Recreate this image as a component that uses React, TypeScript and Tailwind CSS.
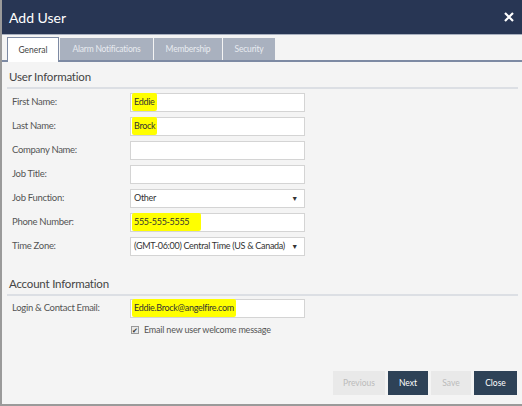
import React from "react";

const font = { fontFamily: 'Lato, "Noto Sans", sans-serif' };

function Hl({ children }: { children: React.ReactNode }) {
  return <span className="bg-[#ffff00] px-[2px] -mx-[2px] py-[2px] rounded-[2px]">{children}</span>;
}

function Row({ label, children }: { label: string; children?: React.ReactNode }) {
  return (
    <div className="flex items-center h-[24px]">
      <div className="w-[123px] pl-[5px] text-[9.5px] tracking-[-0.3px] text-[#555]">{label}</div>
      {children}
    </div>
  );
}

function Input({ children }: { children?: React.ReactNode }) {
  return (
    <div className="w-[175px] h-[19px] bg-white border border-[#d4d4d4] flex items-center px-[3px] text-[9px] tracking-[-0.3px] text-[#333] whitespace-nowrap">
      {children}
    </div>
  );
}

function Select({ value }: { value: string }) {
  return (
    <div className="w-[175px] h-[19px] bg-white border border-[#d4d4d4] flex items-center justify-between px-[3px] text-[9px] tracking-[-0.3px] text-[#333] whitespace-nowrap">
      <span>{value}</span>
      <span className="text-[7px] text-[#333] mr-[3px]">▼</span>
    </div>
  );
}

export default function App() {
  return (
    <div className="w-[522px] h-[406px] bg-[#f4f4f4] flex flex-col border-l-2 border-b-2 border-[#9a9a9a] overflow-hidden" style={font}>
      <div className="h-[35px] bg-[#283654] flex items-center justify-between pl-[7px] pr-[8px] shrink-0 border-b border-[#a8b0bf]">
        <span className="text-white text-[14px]">Add User</span>
        <svg width="10" height="10" viewBox="0 0 10 10">
          <path d="M1 1 L9 9 M9 1 L1 9" stroke="white" strokeWidth="2.2" />
        </svg>
      </div>
      <div className="flex items-end pl-[5px] pt-[4px] h-[27px] border-b-2 border-[#7d8aa3] shrink-0">
        <div className="w-[52px] bg-white border border-[#7d8aa3] border-b-0 flex items-center justify-center text-[8.5px] text-[#444] -mb-[2px] h-[25px]">General</div>
        <div className="w-[93px] h-[22px] bg-[#a9b1bf] ml-[1px] flex items-center justify-center text-[8.5px] tracking-[-0.2px] text-[#e8ebf0]">Alarm Notifications</div>
        <div className="w-[68px] h-[22px] bg-[#a9b1bf] ml-[1px] flex items-center justify-center text-[8.5px] tracking-[-0.2px] text-[#e8ebf0]">Membership</div>
        <div className="w-[52px] h-[22px] bg-[#a9b1bf] ml-[1px] flex items-center justify-center text-[8.5px] tracking-[-0.2px] text-[#e8ebf0]">Security</div>
      </div>
      <div className="flex flex-col pl-[5px] pr-[4px] pt-[6px]">
        <div className="text-[11.5px] tracking-[-0.2px] leading-[18px] text-[#444] pl-[2px] pb-[1px] border-b-2 border-[#dcdfe4]">User Information</div>
        <div className="flex flex-col pt-[1px]">
          <Row label="First Name:"><Input><Hl>Eddie</Hl></Input></Row>
          <Row label="Last Name:"><Input><Hl>Brock</Hl></Input></Row>
          <Row label="Company Name:"><Input /></Row>
          <Row label="Job Title:"><Input /></Row>
          <Row label="Job Function:"><Select value="Other" /></Row>
          <Row label="Phone Number:"><Input><span className="bg-[#ffff00] px-[2px] -mx-[2px] py-[2px] pr-[12px] rounded-[2px]">555-555-5555</span></Input></Row>
          <Row label="Time Zone:"><Select value="(GMT-06:00) Central Time (US & Canada)" /></Row>
        </div>
        <div className="text-[11.5px] tracking-[-0.2px] leading-[18px] text-[#444] pl-[2px] pb-[1px] mt-[17px] border-b-2 border-[#dcdfe4]">Account Information</div>
        <div className="flex flex-col">
          <Row label="Login & Contact Email:"><Input><Hl>Eddie.Brock@angelfire.com</Hl></Input></Row>
          <div className="flex items-center h-[20px] pl-[124px]">
            <div className="w-[8px] h-[8px] border border-[#999] bg-[#e8e8e8] flex items-center justify-center text-[7px] leading-none text-[#333]">✔</div>
            <span className="ml-[5px] text-[9px] tracking-[-0.2px] text-[#555]">Email new user welcome message</span>
          </div>
        </div>
      </div>
      <div className="flex-1" />
      <div className="flex justify-end gap-[3px] pr-[5px] pb-[9px]">
        <div className="w-[52px] h-[24px] bg-[#e9e9e9] text-[#bbb] text-[8.5px] flex items-center justify-center">Previous</div>
        <div className="w-[40px] h-[24px] bg-[#2e4257] text-white text-[8.5px] flex items-center justify-center">Next</div>
        <div className="w-[40px] h-[24px] bg-[#e9e9e9] text-[#bbb] text-[8.5px] flex items-center justify-center">Save</div>
        <div className="w-[43px] h-[24px] bg-[#2e4257] text-white text-[8.5px] flex items-center justify-center">Close</div>
      </div>
    </div>
  );
}
